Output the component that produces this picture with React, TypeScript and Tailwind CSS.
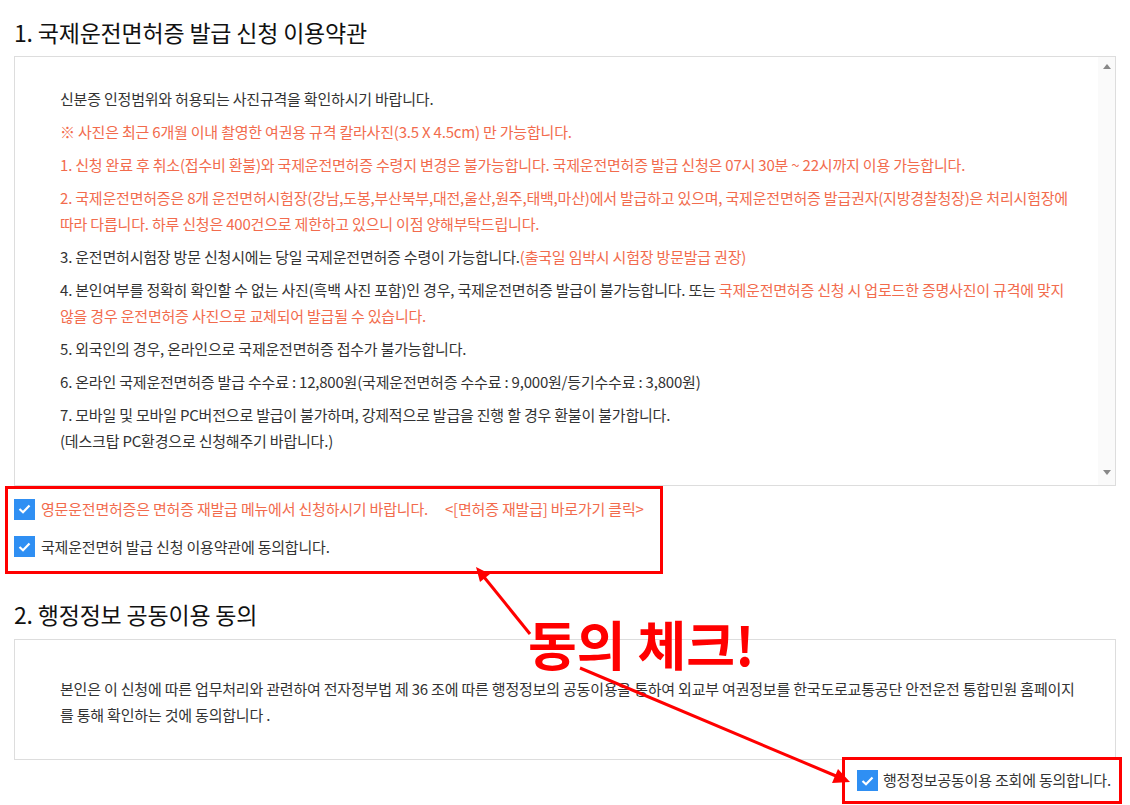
import React from "react";

const orange = "text-[#f26b4d]";

function Check() {
  return (
    <span className="flex h-[21px] w-[21px] shrink-0 items-center justify-center bg-[#2f8ff3]">
      <svg width="13" height="10" viewBox="0 0 13 10">
        <path d="M1.5 5l3.5 3.3L11.5 1.5" fill="none" stroke="#fff" strokeWidth="2.2" />
      </svg>
    </span>
  );
}

export default function App() {
  return (
    <div className="relative h-[805px] w-[1130px] overflow-hidden bg-white font-['Noto_Sans_CJK_KR',sans-serif] text-[#333]">
      <h2 className="ml-[14px] mt-4 text-[23px] leading-8 tracking-[-0.2px] text-[#111]">1. 국제운전면허증 발급 신청 이용약관</h2>

      {/* 약관 박스 */}
      <div className="mx-[14px] mt-2 flex h-[430px] border border-[#dddddd]">
        <div className="flex flex-1 flex-col gap-[7px] pl-[45px] pt-[29px] text-[15px] leading-[26px] tracking-[-0.2px]">
          <p>신분증 인정범위와 허용되는 사진규격을 확인하시기 바랍니다.</p>
          <p className={orange}>※ 사진은 최근 6개월 이내 촬영한 여권용 규격 칼라사진(3.5 X 4.5cm) 만 가능합니다.</p>
          <p className={orange}>
            1. 신청 완료 후 취소(접수비 환불)와 국제운전면허증 수령지 변경은 불가능합니다. 국제운전면허증 발급 신청은 07시 30분 ~ 22시까지 이용 가능합니다.
          </p>
          <p className={orange}>
            2. 국제운전면허증은 8개 운전면허시험장(강남,도봉,부산북부,대전,울산,원주,태백,마산)에서 발급하고 있으며, 국제운전면허증 발급권자(지방경찰청장)은 처리시험장에
            <br />
            따라 다릅니다. 하루 신청은 400건으로 제한하고 있으니 이점 양해부탁드립니다.
          </p>
          <p>
            3. 운전면허시험장 방문 신청시에는 당일 국제운전면허증 수령이 가능합니다.
            <span className={orange}>(출국일 임박시 시험장 방문발급 권장)</span>
          </p>
          <p>
            4. 본인여부를 정확히 확인할 수 없는 사진(흑백 사진 포함)인 경우, 국제운전면허증 발급이 불가능합니다. 또는{" "}
            <span className={orange}>
              국제운전면허증 신청 시 업로드한 증명사진이 규격에 맞지
              <br />
              않을 경우 운전면허증 사진으로 교체되어 발급될 수 있습니다.
            </span>
          </p>
          <p>5. 외국인의 경우, 온라인으로 국제운전면허증 접수가 불가능합니다.</p>
          <p>6. 온라인 국제운전면허증 발급 수수료 : 12,800원(국제운전면허증 수수료 : 9,000원/등기수수료 : 3,800원)</p>
          <p>
            7. 모바일 및 모바일 PC버전으로 발급이 불가하며, 강제적으로 발급을 진행 할 경우 환불이 불가합니다.
            <br />
            (데스크탑 PC환경으로 신청해주기 바랍니다.)
          </p>
        </div>
        <div className="flex w-[17px] flex-col items-center justify-between bg-[#fafafa] pb-[10px] pt-[7px]">
          <span className="h-0 w-0 border-x-[4px] border-b-[5px] border-x-transparent border-b-[#888]" />
          <span className="h-0 w-0 border-x-[4px] border-t-[5px] border-x-transparent border-t-[#888]" />
        </div>
      </div>

      {/* 동의 체크 */}
      <div className="ml-[5px] flex w-[658px] flex-col gap-[15px] border-[3px] border-[#ff0000] pb-[13px] pl-[6px] pt-[9px] text-[15px] tracking-[-0.2px]">
        <label className="flex items-center gap-[6px]">
          <Check />
          <span className={orange}>영문운전면허증은 면허증 재발급 메뉴에서 신청하시기 바랍니다.</span>
          <span className={`${orange} ml-[11px]`}>&lt;[면허증 재발급] 바로가기 클릭&gt;</span>
        </label>
        <label className="flex items-center gap-[6px]">
          <Check />
          <span>국제운전면허 발급 신청 이용약관에 동의합니다.</span>
        </label>
      </div>

      <h2 className="ml-[14px] mt-6 text-[23px] leading-8 tracking-[-0.2px] text-[#111]">2. 행정정보 공동이용 동의</h2>
      <div className="mx-[14px] mt-[9px] h-[121px] border border-[#dddddd] pl-[45px] pt-[36px] text-[15px] leading-[26px] tracking-[-0.2px]">
        <p>
          본인은 이 신청에 따른 업무처리와 관련하여 전자정부법 제 36 조에 따른 행정정보의 공동이용을 통하여 외교부 여권정보를 한국도로교통공단 안전운전 통합민원 홈페이지
          <br />
          를 통해 확인하는 것에 동의합니다 .
        </p>
      </div>
      <div className="-mt-[3px] ml-auto mr-[8px] flex h-[47px] w-[280px] items-center gap-[5px] border-[3px] border-[#ff0000] bg-white pl-[12px] text-[15px] tracking-[-0.2px]">
        <Check />
        <span>행정정보공동이용 조회에 동의합니다.</span>
      </div>

      {/* 주석 화살표 */}
      <svg className="pointer-events-none absolute left-0 top-0" width="1130" height="805">
        <line x1="530" y1="634" x2="484" y2="577" stroke="#ff0000" strokeWidth="3" />
        <polygon points="476,567 490,574 480,582" fill="#ff0000" />
        <line x1="580" y1="668" x2="836" y2="776" stroke="#ff0000" strokeWidth="3" />
        <polygon points="850,782 832,783 838,769" fill="#ff0000" />
      </svg>
      <div className="absolute left-[528px] top-[617px] text-[53px] font-bold leading-none text-[#ff0000]">동의 체크!</div>
    </div>
  );
}
